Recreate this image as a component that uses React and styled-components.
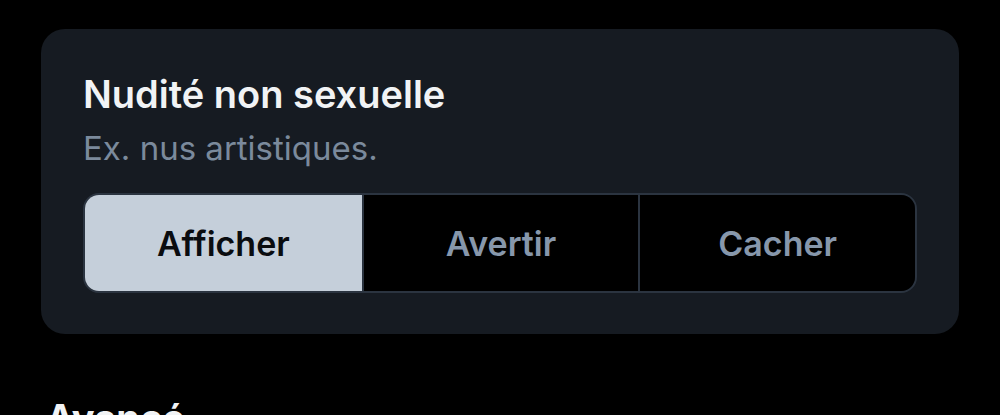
import React, { useState } from 'react';
import styled, { createGlobalStyle } from 'styled-components';

const GlobalStyle = createGlobalStyle`
    html, body {
        margin: 0;
        padding: 0;
        background: #000000;
        font-family: Inter, "Noto Sans", sans-serif;
        -webkit-font-smoothing: antialiased;
    }
`;

const Page = styled.div`
    width: 1000px;
    height: 415px;
    overflow: hidden;
    padding: 29px 41px 0;
    box-sizing: border-box;
    display: flex;
    flex-direction: column;
`;

const Card = styled.section`
    background: #161b22;
    border-radius: 24px;
    padding: 42px 42px 41px;
    display: flex;
    flex-direction: column;
`;

const Title = styled.h2`
    margin: 0;
    color: #f1f3f5;
    font-size: 38px;
    font-weight: 600;
    line-height: 46px;
`;

const Description = styled.p`
    margin: 11px 0 0;
    color: #7b8a9c;
    font-size: 33px;
    font-weight: 400;
    line-height: 40px;
`;

const Segmented = styled.div`
    margin-top: 25px;
    display: grid;
    grid-template-columns: repeat(3, 1fr);
    border: 2px solid #2b3440;
    border-radius: 16px;
    overflow: hidden;
    height: 100px;
    box-sizing: border-box;
`;

const Segment = styled.button`
    border: none;
    border-left: ${(p) => (p.$first ? 'none' : '2px solid #2b3440')};
    background: ${(p) => (p.$active ? '#c5cfda' : '#000000')};
    color: ${(p) => (p.$active ? '#0a0c0f' : '#8797ab')};
    font-family: inherit;
    font-size: 34px;
    font-weight: 600;
    cursor: pointer;
    padding: 0;
`;

const SectionHeading = styled.h3`
    margin: 61px 0 0 5px;
    color: #f1f3f5;
    font-size: 38px;
    font-weight: 700;
`;

const options = ['Afficher', 'Avertir', 'Cacher'];

export default function App() {
    const [value, setValue] = useState('Afficher');

    return (
        <Page>
            <GlobalStyle />
            <Card>
                <Title>Nudité non sexuelle</Title>
                <Description>Ex. nus artistiques.</Description>
                <Segmented>
                    {options.map((opt, i) => (
                        <Segment
                            key={opt}
                            $first={i === 0}
                            $active={value === opt}
                            onClick={() => setValue(opt)}
                        >
                            {opt}
                        </Segment>
                    ))}
                </Segmented>
            </Card>
            <SectionHeading>Avancé</SectionHeading>
        </Page>
    );
}
